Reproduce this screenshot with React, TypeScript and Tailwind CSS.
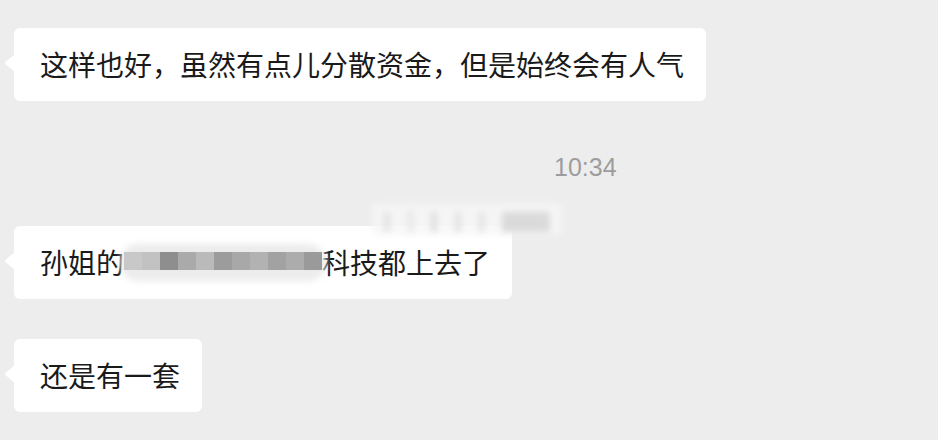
import React from "react"

const cjk = { fontFamily: '"Noto Sans CJK SC", "Noto Sans", sans-serif' }

function Tail() {
  return (
    <svg className="absolute left-[-10px] top-[26px]" width="11" height="18" viewBox="0 0 11 18">
      <path d="M11 0 L11 18 L1.6 10.2 Q0.4 9 1.6 7.8 Z" fill="#ffffff" />
    </svg>
  )
}

function Bubble({ children }: { children: React.ReactNode }) {
  return (
    <div className="relative self-start bg-white rounded-[6px] pl-[26px] pr-[22px] py-[16px] text-[28px] leading-[41px] text-[#1a1a1a] whitespace-nowrap" style={cjk}>
      <Tail />
      {children}
    </div>
  )
}

// pixelated mosaic hiding part of the message
function Mosaic() {
  const blocks = ["#c8c8c8", "#c2c2c2", "#8e8e8e", "#aaaaaa", "#bababa", "#9c9c9c", "#a8a8a8", "#b2b2b2", "#a2a2a2", "#acacac", "#9a9a9a"]
  return (
    <span className="relative inline-flex flex-col justify-center w-[198px] h-[41px] align-top">
      <span className="absolute -inset-x-[4px] inset-y-[2px] rounded-[18px] bg-[#ececec] blur-[3px]" />
      <span className="relative flex h-[18px] -mt-[4px]">
        {blocks.map((c, i) => (
          <span key={i} className="w-[18px] h-full" style={{ backgroundColor: c }} />
        ))}
      </span>
    </span>
  )
}

export default function App() {
  return (
    <div className="relative w-[938px] h-[440px] overflow-hidden bg-[#ededed] flex flex-col pt-[28px] pl-[14px]">
      <Bubble>这样也好，虽然有点儿分散资金，但是始终会有人气</Bubble>

      <div className="ml-[540px] mt-[51px] text-[25px] leading-[30px] text-[#9d9d9d]" style={{ fontFamily: '"Liberation Sans", Arial, sans-serif' }}>
        10:34
      </div>

      <div className="mt-[44px] flex">
        <Bubble>
          孙姐的<Mosaic />科技都上去了
        </Bubble>
      </div>

      <div className="mt-[40px] flex">
        <Bubble>还是有一套</Bubble>
      </div>

      {/* blurred scrap over the second message */}
      <div className="absolute left-[372px] top-[203px] w-[190px] h-[32px] flex items-end gap-[18px] px-[12px] pb-[3px] bg-[#f6f6f6]/80 blur-[3px]">
        <span className="w-[6px] h-[20px] bg-[#e2e2e2]" />
        <span className="w-[5px] h-[22px] bg-[#e4e4e4]" />
        <span className="w-[6px] h-[20px] bg-[#dedede]" />
        <span className="w-[6px] h-[20px] bg-[#e2e2e2]" />
        <span className="w-[5px] h-[20px] bg-[#e0e0e0]" />
        <span className="flex-1 h-[20px] bg-[#dadada]" />
      </div>
    </div>
  )
}
